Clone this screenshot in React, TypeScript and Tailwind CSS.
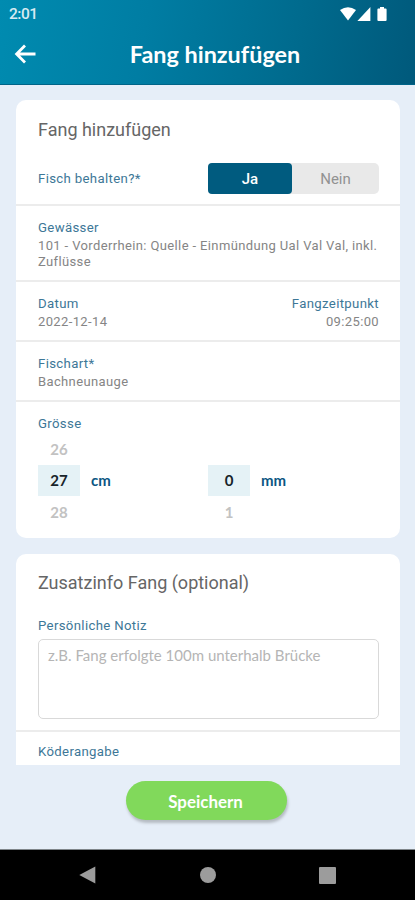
import type { ReactNode } from 'react';

function StatusBar() {
  return (
    <div className="flex h-7 items-center justify-between pl-[9px] pr-7">
      <span className="font-['Roboto',sans-serif] text-[15.5px] font-medium leading-5 tracking-[-0.5px] text-[#d8ebf2]">2:01</span>
      <div className="flex h-4 items-center text-white">
        <svg width="16" height="14" viewBox="0 0 16 14" fill="currentColor" aria-hidden="true">
          <path d="M0 3.1Q8-2.7 16 3.1L8 13.6Z" />
        </svg>
        <svg className="ml-[1px]" width="14" height="14" viewBox="0 0 14 14" fill="currentColor" aria-hidden="true">
          <path d="M13.4 0v14H.4Z" />
        </svg>
        <svg className="ml-[6px]" width="10" height="14" viewBox="0 0 10 14" fill="currentColor" aria-hidden="true">
          <path d="M3 0h4v1.4h1.6a1 1 0 0 1 1 1V13a1 1 0 0 1-1 1H1.4a1 1 0 0 1-1-1V2.4a1 1 0 0 1 1-1H3Z" />
        </svg>
      </div>
    </div>
  );
}

function Header() {
  return (
    <header className="h-[85px] shrink-0 border-b border-[#006488] bg-[linear-gradient(100deg,#008bb0_0%,#007da3_35%,#006b8e_70%,#00597b_100%)]">
      <StatusBar />
      <div className="grid h-[52px] grid-cols-[50px_1fr_35px] items-center">
        <svg className="ml-[14px]" width="23" height="20" viewBox="0 0 23 20" fill="none" stroke="white" strokeWidth="2.8" aria-hidden="true">
          <path d="M21.5 10H3M11 1.6 2.6 10l8.4 8.4" />
        </svg>
        <h1 className="text-center text-[23.4px] font-bold leading-8 text-white">Fang hinzufügen</h1>
      </div>
    </header>
  );
}

function Label({ children }: { children: ReactNode }) {
  return <div className="text-[13.2px] leading-[19px] tracking-[0.34px] text-[#3d7797]">{children}</div>;
}

function Value({ children }: { children: ReactNode }) {
  return <div className="pt-px text-[13px] leading-4 tracking-[0.37px] text-[#858585]">{children}</div>;
}

function Wheel({ before, value, after, unit }: { before: string; value: string; after: string; unit: string }) {
  return (
    <div className="grid grid-cols-[42px_1fr] grid-rows-[32px_31px_32px] items-center font-['Lato',sans-serif] text-[15px] font-bold">
      <span className="text-center text-[#c2c2c2]">{before}</span>
      <span />
      <span className="flex h-full items-center justify-center bg-[#e5f2f6] text-[#17242a]">{value}</span>
      <span className="pl-[11px] text-[15px] text-[#0c5683]">{unit}</span>
      <span className="text-center text-[#c2c2c2]">{after}</span>
    </div>
  );
}

export default function App() {
  return (
    <div className="flex h-[900px] w-[415px] flex-col overflow-hidden bg-[#e6eef8] font-['Lato',sans-serif]">
      <Header />

      <main className="h-[680px] shrink-0 overflow-hidden pl-4 pr-[15px] pt-[15px] font-['Roboto',sans-serif]">
        <section className="h-[438px] rounded-[10px] bg-white">
          <div className="h-[106px] border-b-2 border-[#ececec] pl-[22px] pr-[21px] pt-[18px]">
            <h2 className="text-[18px] leading-6 text-[#666]">Fang hinzufügen</h2>
            <div className="mt-[20px] flex h-8 items-center justify-between">
              <Label>Fisch behalten?*</Label>
              <div className="flex h-[31px] w-[171px] rounded-[5px] bg-[#e9e9e9] text-center text-[15px] leading-8">
                <span className="w-[84px] rounded-[4px] bg-[#005b7f] font-medium text-white">Ja</span>
                <span className="flex-1 text-[#929292]">Nein</span>
              </div>
            </div>
          </div>

          <div className="h-[76px] border-b-2 border-[#ececec] pl-[22px] pt-[12px]">
            <Label>Gewässer</Label>
            <Value>
              101 - Vorderrhein: Quelle - Einmündung Ual Val Val, inkl.
              <br />
              Zuflüsse
            </Value>
          </div>

          <div className="flex h-[60px] justify-between border-b-2 border-[#ececec] pl-[22px] pr-[21px] pt-[12px]">
            <div>
              <Label>Datum</Label>
              <Value>2022-12-14</Value>
            </div>
            <div className="text-right">
              <Label>Fangzeitpunkt</Label>
              <Value>09:25:00</Value>
            </div>
          </div>

          <div className="h-[60px] border-b-2 border-[#ececec] pl-[22px] pt-[12px]">
            <Label>Fischart*</Label>
            <Value>Bachneunauge</Value>
          </div>

          <div className="pl-[22px] pt-[12px]">
            <Label>Grösse</Label>
            <div className="grid grid-cols-[170px_1fr]">
              <Wheel before="26" value="27" after="28" unit="cm" />
              <Wheel before="" value="0" after="1" unit="mm" />
            </div>
          </div>
        </section>

        <section className="mt-4 h-[240px] rounded-[10px] bg-white">
          <div className="h-[178px] border-b-2 border-[#ececec] pl-[22px] pr-[21px] pt-[17px]">
            <h2 className="text-[18px] leading-6 text-[#666]">Zusatzinfo Fang (optional)</h2>
            <div className="mt-[21px]">
              <Label>Persönliche Notiz</Label>
            </div>
            <div className="mt-[4px] h-20 rounded-[5px] border border-[#d9d9d9] px-[9px] pt-[5px] font-['Lato',sans-serif] text-[15px] leading-5 text-[#b5b5b5]">
              z.B. Fang erfolgte 100m unterhalb Brücke
            </div>
          </div>
          <div className="pl-[22px] pt-[10px]">
            <Label>Köderangabe</Label>
          </div>
        </section>
      </main>

      <footer className="h-[85px] shrink-0 border-b border-[#7f858a] pt-4">
        <button className="ml-[126px] block h-[39px] w-[161px] rounded-full bg-[#81d95b] pr-[2px] text-[16.9px] font-bold leading-[41px] text-white shadow-[1px_3px_3px_#b5bbc2]">
          Speichern
        </button>
      </footer>

      <nav className="flex h-[50px] shrink-0 items-center bg-black pl-[79px] text-[#9c9c9c]">
        <svg width="17" height="18" viewBox="0 0 17 18" fill="currentColor" aria-hidden="true">
          <path d="M16.3.5v17L.3 9Z" />
        </svg>
        <span className="ml-[104px] size-4 rounded-full bg-[#9c9c9c]" />
        <span className="ml-[103px] size-[17px] rounded-[1px] bg-[#9c9c9c]" />
      </nav>
    </div>
  );
}
